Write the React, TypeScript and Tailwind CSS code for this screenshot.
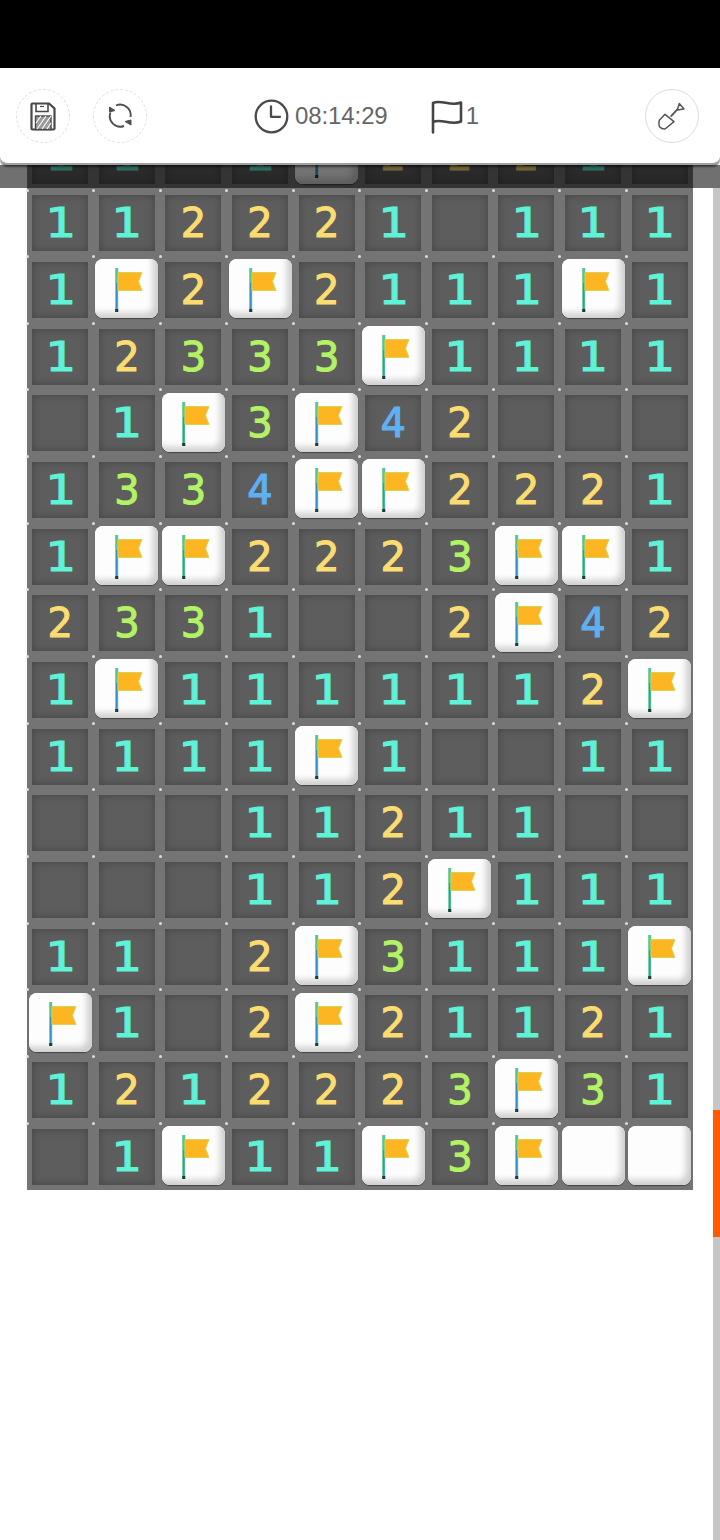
import React from 'react';

const board = [
  '112221.111',
  '1F2F2111F1',
  '12333F1111',
  '.1F3F42...',
  '1334FF2221',
  '1FF2223FF1',
  '2331..2F42',
  '1F1111112F',
  '1111F1..11',
  '...11211..',
  '...112F111',
  '11.2F3111F',
  'F1.2F21121',
  '1212223F31',
  '.1F11F3FUU',
];

const topRow = '11.1F2221.';

const digitStyle: Record<string, string> = {
  '1': 'scale-x-[1.2] text-[#5ef2d6]',
  '2': 'text-[#fbdc70]',
  '3': 'text-[#b2f264]',
  '4': 'text-[#5fb0f2]',
};

function FlagMark() {
  return (
    <svg width="63" height="59" viewBox="0 0 63 59" className="block">
      <path d="M21.7 9V53" stroke="#58c68e" strokeWidth="3" />
      <path d="M21.7 24V50" stroke="#3f8fc4" strokeWidth="1.4" />
      <path d="M21.7 53v-3" stroke="#1f3b3b" strokeWidth="3" />
      <path d="M23 13.5H47L43.5 22.5L47 31.5H23Z" fill="#fdb522" stroke="#d3d64e" strokeWidth="1" />
    </svg>
  );
}

function Cell({ value }: { value: string }) {
  const raised = value === 'F' || value === 'U';
  return (
    <div className="relative flex items-center justify-center bg-[#747474]">
      <span className="absolute -left-[1.5px] -top-[1.5px] z-[1] h-[3px] w-[3px] rounded-full bg-[#dcdcdc]" />
      {raised ? (
        <div className="mb-[2px] h-[59px] w-[63px] overflow-hidden rounded-[8px] bg-[#fdfdfd] shadow-[inset_-5px_-5px_6px_#cecece,inset_2px_2px_3px_#ffffff,0_1px_1px_#444444]">
          {value === 'F' && <FlagMark />}
        </div>
      ) : (
        <div className="flex h-[56px] w-[56px] items-center justify-center bg-[#5d5d5d] font-['DejaVu_Sans',sans-serif] text-[40px] leading-none shadow-[inset_0_0_8px_#444444] [-webkit-text-stroke:1.1px]">
          <span className={'inline-block ' + (digitStyle[value] ?? '')}>{value === '.' ? '' : value}</span>
        </div>
      )}
    </div>
  );
}

function RoundButton({ children, dashed }: { children: React.ReactNode; dashed?: boolean }) {
  return (
    <button
      className={
        'flex h-[54px] w-[54px] items-center justify-center rounded-full border border-[#dedede] ' +
        (dashed ? 'border-dashed' : 'border-solid')
      }
    >
      {children}
    </button>
  );
}

function SaveIcon() {
  return (
    <svg width="26" height="29" viewBox="0 0 26 29" fill="none" stroke="#484848" strokeWidth="2.2">
      <path d="M2.5 1.5H19L24.5 6.5V26.5a1 1 0 0 1-1 1H2.5a1 1 0 0 1-1-1V2.5a1 1 0 0 1 1-1Z" />
      <path d="M6 1.5V9.5H18V1.5" strokeWidth="1.6" />
      <path d="M10 4.5H14" strokeWidth="1.2" />
      <rect x="5.5" y="14" width="15.5" height="13.5" fill="#9c9c9c" strokeWidth="1.4" />
      <path d="M6 21l5-7M7 27l9-13M12 27l9-13M17 27l4-6" stroke="#ffffff" strokeWidth="1.1" />
    </svg>
  );
}

function RefreshIcon() {
  return (
    <svg width="26" height="26" viewBox="0 0 26 26" fill="none" stroke="#505050" strokeWidth="1.9">
      <path d="M3.5 9.5A10.5 10.5 0 0 0 17 23" />
      <path d="M9 2.5A10.5 10.5 0 0 1 23.5 14" />
      <path d="M2.5 4L8 7.5L2.5 9Z" fill="#505050" strokeWidth="1" />
      <path d="M24 22L18 18.5L24 17Z" fill="#505050" strokeWidth="1" />
    </svg>
  );
}

function ShovelIcon() {
  return (
    <svg width="28" height="28" viewBox="0 0 28 28" fill="none" stroke="#555555" strokeWidth="1.5" strokeLinejoin="round">
      <path d="M12.7 14.7L19.3 7.3" strokeWidth="1.8" />
      <path d="M21.3 1.5L26 7L19.3 8Z" />
      <path d="M7 12.3L1.5 18C0.8 20.5 0.8 23 1.5 24.7C3 26.5 5 27 7 27L16 19.7Z" />
    </svg>
  );
}

function ClockIcon() {
  return (
    <svg width="35" height="35" viewBox="0 0 35 35" fill="none" stroke="#4a4a4a" strokeWidth="2.3" strokeLinecap="round" strokeLinejoin="round">
      <circle cx="17.5" cy="17.5" r="15.8" />
      <path d="M17 7.5V17.8H26" />
    </svg>
  );
}

function BigFlagIcon() {
  return (
    <svg width="32" height="35" viewBox="0 0 32 35" fill="none" stroke="#454545" strokeWidth="2.6" strokeLinecap="round" strokeLinejoin="round">
      <path d="M2 33.5V4C10 0 20 8 30 3.5V22.5C20 27 10 19 2 23" />
    </svg>
  );
}

export default function App() {
  return (
    <div className="flex h-[1540px] w-[720px] flex-col overflow-hidden bg-white font-['Liberation_Sans',sans-serif]">
      <div className="h-[68px] bg-black" />

      <header className="relative z-10 flex h-[97px] items-center rounded-b-[8px] border-b-2 border-[#a0a0a0] bg-white pl-[16px] pr-[21px] pt-[1px] shadow-[0_2px_2px_rgba(0,0,0,0.5)]">
        <div className="flex gap-[23px]">
          <RoundButton dashed>
            <SaveIcon />
          </RoundButton>
          <RoundButton dashed>
            <RefreshIcon />
          </RoundButton>
        </div>
        <div className="ml-[107px] flex items-center">
          <ClockIcon />
          <span className="ml-[6px] text-[24px] leading-none tracking-[-0.1px] text-[#666666]">08:14:29</span>
        </div>
        <div className="ml-[43px] flex items-center">
          <BigFlagIcon />
          <span className="ml-[3px] text-[24px] leading-none text-[#666666]">1</span>
        </div>
        <div className="ml-auto">
          <RoundButton>
            <ShovelIcon />
          </RoundButton>
        </div>
      </header>

      <div className="relative h-[23px] overflow-hidden bg-[#707070] px-[27px]">
        <div className="relative w-[666px] overflow-hidden">
          <div className="-mt-[43px] grid h-[67px] grid-cols-10">
            {topRow.split('').map((v, i) => (
              <Cell key={i} value={v} />
            ))}
          </div>
          <div className="absolute inset-0 bg-black/55" />
        </div>
      </div>

      <div className="flex flex-1">
        <main className="flex-1 pl-[27px]">
          <div className="grid h-[1002px] w-[666px] grid-cols-10 grid-rows-15 bg-[#747474] pt-[2px]">
            {board.flatMap((row, r) => row.split('').map((v, c) => <Cell key={`${r}-${c}`} value={v} />))}
          </div>
        </main>
        <div className="w-[7px] bg-[#c6c6c6] pt-[922px]">
          <div className="h-[127px] bg-[#ff5a00]" />
        </div>
      </div>
    </div>
  );
}
